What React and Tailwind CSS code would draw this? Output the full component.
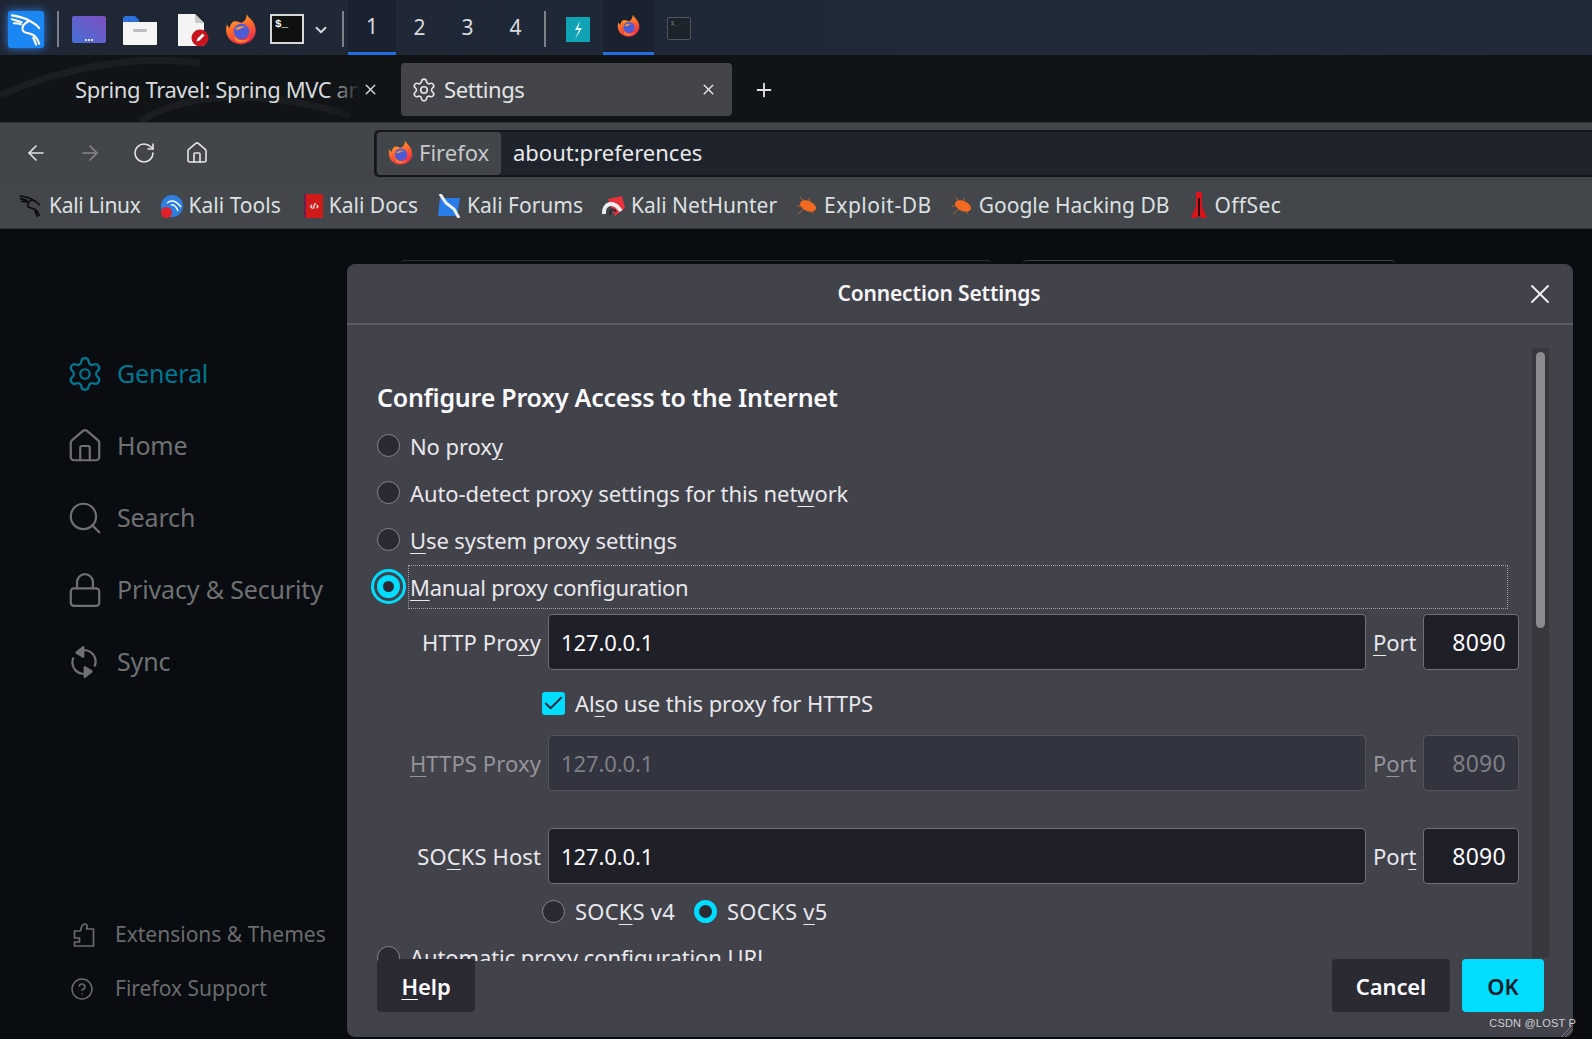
import { ArrowLeft, ArrowRight, RotateCw, Home, X, Plus, Search, Lock, ChevronDown, Check, CircleHelp, Settings } from 'lucide-react';

const FONT = "font-['Noto_Sans',sans-serif]";

function FirefoxIcon({ size = 30, className = '' }) {
    return (
        <svg width={size} height={size} viewBox="0 0 32 32" className={className}>
            <defs>
                <linearGradient id="ffBody" x1="0.2" y1="0" x2="0.6" y2="1">
                    <stop offset="0" stopColor="#ffc02e" />
                    <stop offset="0.45" stopColor="#ff6a2b" />
                    <stop offset="1" stopColor="#e8264d" />
                </linearGradient>
            </defs>
            <path d="M21 1 c1 3 5 5 7 9 c3 6 2 12 -2 16 c-5 5 -14 6 -20 1 C1 23 0 16 2 11 c.5 2 1.500 3 2.500 3.500 C5 11 7 8.500 9 8 c3-.5 5 1 7 1.500 c3-1 5-4 5-8.500 z" fill="url(#ffBody)" />
            <circle cx="16" cy="18" r="7.500" fill="#4f5bd5" />
            <path d="M10 16 c2-3 7-4 11-2 c-3-.5-5 0-6 1.500 c-2 .5-3 .5-5 .5 z" fill="#ff9b2e" />
            <path d="M9 22 c3 5 10 6 15 2 c-2 4-8 6-12 4 c-2-1-3-3-3-6 z" fill="#ff8a2e" />
        </svg>
    );
}

function KaliDragon({ className = '', stroke = 'white', width = 2 }) {
    return (
        <svg viewBox="0 0 36 36" fill="none" stroke={stroke} strokeWidth={width} strokeLinecap="round" strokeLinejoin="round" className={className}>
            <path d="M3 3 c6 1 12 2 17 5 c4 2 8 4 11 8" />
            <path d="M3 7 c4 1 7 2 10 3" />
            <path d="M5 11 c3 0 5 0 7 1" />
            <path d="M20 9 c-4 2 -7 5 -6 9 c1 3 5 3 8 4 c4 1 7 4 9 10" />
            <path d="M25 26 l3 7" />
        </svg>
    );
}

function LauncherIcon() {
    return (
        <div className="w-[34px] h-[27px] rounded-[2px] bg-gradient-to-tr from-[#3f6fd8] to-[#7a4fc0] flex items-end justify-center pb-[2px] gap-[1px]">
            <span className="w-[2px] h-[2px] bg-white/80" />
            <span className="w-[2px] h-[2px] bg-white/80" />
            <span className="w-[2px] h-[2px] bg-white/80" />
        </div>
    );
}

function FolderIcon() {
    return (
        <svg width="36" height="32" viewBox="0 0 36 32">
            <path d="M1 5 a3 3 0 0 1 3-3 h9 l4 4 v4 H1 z" fill="#2f6fdc" />
            <path d="M1 8 h34 v22 a1 1 0 0 1-1 1 H2 a1 1 0 0 1-1-1 z" fill="#f4f5f5" />
            <rect x="11" y="15" width="14" height="3" rx="1.500" fill="#b9bcc0" />
        </svg>
    );
}

function DocIcon() {
    return (
        <svg width="34" height="34" viewBox="0 0 34 34">
            <path d="M1 1 h17 l9 9 v23 H1 z" fill="#f4f4f4" />
            <path d="M18 1 l9 9 h-9 z" fill="#c9c9c9" />
            <circle cx="23" cy="25" r="8.500" fill="#c8141c" />
            <path d="M19.500 28.500 l1-3 5-5 2 2 -5 5 z" fill="white" />
        </svg>
    );
}

function TerminalIcon({ dim }) {
    if (dim) {
        return (
            <div className="w-[24px] h-[23px] rounded-[2px] border border-[#4d5560] bg-[#1b232b] text-[5px] leading-[8px] pl-[3px] pt-[2px] text-[#7f8890] font-['Liberation_Mono',monospace]">$_</div>
        );
    }
    return (
        <div className="w-[34px] h-[30px] border-2 border-[#d5d7d9] bg-[#0e1110] text-white text-[11px] leading-[16px] font-bold pl-[3px] font-['Liberation_Mono',monospace]">$_</div>
    );
}

function Separator({ className = '' }) {
    return <div className={`w-[2px] h-[36px] bg-[#7c8188] ${className}`} />;
}

function Panel() {
    return (
        <div className={`h-[55px] flex items-start bg-gradient-to-r from-[#1f2735] to-[#202a38] ${FONT}`}>
            <div className="ml-[8px] mt-[11px] w-[36px] h-[37px] rounded-[3px] bg-[#1c86f2] shadow-[0_0_9px_#2f7fe8] flex items-center justify-center">
                <KaliDragon className="w-[35px] h-[36px]" width={2.2} />
            </div>
            <Separator className="ml-[13px] mt-[11px]" />
            <div className="ml-[13px] mt-[16px]"><LauncherIcon /></div>
            <div className="ml-[16px] mt-[14px]"><FolderIcon /></div>
            <div className="ml-[19px] mt-[13px]"><DocIcon /></div>
            <div className="ml-[14px] mt-[13px]"><FirefoxIcon size={33} /></div>
            <div className="ml-[12px] mt-[14px]"><TerminalIcon /></div>
            <ChevronDown size={18} strokeWidth={2.5} className="ml-[8px] mt-[21px] text-[#d5d7d9]" />
            <Separator className="ml-[12px] mt-[11px]" />
            <div className="ml-[4px] w-[48px] h-[55px] bg-[#1a2230] border-b-[3px] border-[#1f6fe0] flex items-center justify-center text-[#d8dade] text-[21px] pt-[2px]">1</div>
            <div className="w-[47px] h-[55px] flex items-center justify-center text-[#d8dade] text-[21px] pt-[1px]">2</div>
            <div className="w-[49px] h-[55px] flex items-center justify-center text-[#d8dade] text-[21px] pt-[1px]">3</div>
            <div className="w-[47px] h-[55px] flex items-center justify-center text-[#d8dade] text-[21px] pt-[1px]">4</div>
            <Separator className="ml-[5px] mt-[11px]" />
            <div className="ml-[20px] mt-[17px] w-[24px] h-[25px] bg-[#10a3b5] flex items-center justify-center">
                <svg width="12" height="20" viewBox="0 0 12 20"><path d="M8 1 L3 10 h4 L3 19 L10 8 H6 z" fill="#e8fbff" /></svg>
            </div>
            <div className="ml-[13px] w-[51px] h-[55px] bg-[#1a2230] border-b-[3px] border-[#1f6fe0] flex items-center justify-center">
                <FirefoxIcon size={24} />
            </div>
            <div className="ml-[13px] mt-[17px]"><TerminalIcon dim /></div>
        </div>
    );
}

function TabStrip() {
    return (
        <div className={`h-[67px] relative flex items-start bg-[#101417] overflow-hidden ${FONT}`}>
            <svg className="absolute left-0 top-0" width="380" height="67" viewBox="0 0 380 67" fill="none" stroke="#1a1e21" strokeWidth="7">
                <path d="M0 40 C70 10 140 0 200 8" />
                <path d="M140 66 C200 30 280 40 350 60" />
            </svg>
            <div className="relative ml-[75px] mt-[8px] w-[285px] h-[53px] flex items-center text-[#d8dadd] text-[22px] tracking-[-0.4px] whitespace-nowrap overflow-hidden">
                Spring Travel: Spring MVC and Spring
                <div className="absolute right-0 top-0 h-full w-[32px] bg-gradient-to-r from-transparent to-[#101417]" />
            </div>
            <X size={17} className="relative ml-[2px] mt-[26px] text-[#d8dadd]" />
            <div className="relative ml-[22px] mt-[8px] w-[331px] h-[53px] rounded-[4px] bg-[#42444a] flex items-center text-[#e3e4e6] text-[22px] tracking-[-0.4px]">
                <Settings size={26} strokeWidth={1.5} className="ml-[10px] mr-[7px] text-[#e3e4e6]" />
                Settings
                <X size={17} className="ml-auto mr-[15px]" />
            </div>
            <Plus size={22} className="relative ml-[21px] mt-[24px] text-[#e3e4e6]" />
        </div>
    );
}

function NavBar() {
    return (
        <div className={`h-[61px] flex items-center bg-[#42454a] border-t border-[#2f3236] ${FONT}`}>
            <ArrowLeft size={24} strokeWidth={1.6} className="ml-[24px] text-[#e3e4e6]" />
            <ArrowRight size={24} strokeWidth={1.6} className="ml-[30px] text-[#85878b]" />
            <RotateCw size={24} strokeWidth={1.6} className="ml-[30px] text-[#e3e4e6]" />
            <Home size={24} strokeWidth={1.6} className="ml-[29px] text-[#e3e4e6]" />
            <div className="ml-[165px] flex-1 h-[47px] rounded-l-[5px] border-2 border-[#14161a] border-r-0 bg-[#1f232b] flex items-center">
                <div className="ml-[1px] w-[124px] h-[43px] rounded-[4px] bg-[#42454a] flex items-center text-[#c6c8cb] text-[22px] pb-[1px]">
                    <FirefoxIcon size={26} className="ml-[11px] mr-[5px]" />
                    Firefox
                </div>
                <span className="ml-[12px] text-[#e8e9eb] text-[22px] pb-[2px]">about:preferences</span>
            </div>
        </div>
    );
}

function BugIcon() {
    return (
        <svg width="22" height="22" viewBox="0 0 22 22">
            <path d="M4 2 L9 7 M2 19 L8 14 M13 3 L13 8 M17 19 L14 14 M1 11 L6 11" stroke="#b3622f" strokeWidth="1" />
            <ellipse cx="12" cy="11" rx="8.500" ry="5" transform="rotate(25 12 11)" fill="#f26a21" />
        </svg>
    );
}

const BOOKMARKS = [
    { label: 'Kali Linux', ml: 'ml-[18px]', tracking: 'tracking-[-0.3px]', icon: <KaliDragon className="w-[25px] h-[24px]" stroke="#0b0b0b" width={2.6} /> },
    {
        label: 'Kali Tools', ml: 'ml-[20px]', icon: (
            <div className="relative w-[22px] h-[24px]">
                <svg width="22" height="22" viewBox="0 0 22 22" className="mt-[1px]">
                    <circle cx="11" cy="11" r="11" fill="#2f7fe0" />
                    <path d="M6 8 C11 4 15 6 20 12 M10 10 C13 9 15 11 17 16" stroke="white" strokeWidth="1.400" fill="none" />
                </svg>
                <div className="absolute left-0 bottom-0 w-[11px] h-[11px] rounded-full bg-[#e0232b]" />
            </div>
        )
    },
    {
        label: 'Kali Docs', ml: 'ml-[23px]', icon: (
            <div className="w-[19px] h-[24px] rounded-[1px] bg-[#cf1a1a] border-l-2 border-[#6b1f4a] flex items-center justify-center text-white text-[8px] font-bold">‹/›</div>
        )
    },
    {
        label: 'Kali Forums', ml: 'ml-[19px]', icon: (
            <svg width="24" height="24" viewBox="0 0 24 24">
                <path d="M3 4 H23 L20 22 H1 z" fill="#2a7de8" />
                <path d="M3 0 L9 9 L17 15 L22 24" stroke="#eef1f4" strokeWidth="3" fill="none" />
            </svg>
        )
    },
    {
        label: 'Kali NetHunter', ml: 'ml-[18px]', icon: (
            <svg width="24" height="24" viewBox="0 0 24 24">
                <path d="M7 5 L21 2 L24 14 L14 22 z" fill="#e8333a" />
                <path d="M3 20 C2 10 12 5 20 17" stroke="#eceff2" strokeWidth="4" fill="none" />
                <path d="M9 21 C9 15 13 14 15 18" stroke="#2b2b2e" strokeWidth="2" fill="none" />
            </svg>
        )
    },
    { label: 'Exploit-DB', ml: 'ml-[19px]', tracking: 'tracking-[0.5px]', icon: <BugIcon /> },
    { label: 'Google Hacking DB', ml: 'ml-[19px]', icon: <BugIcon /> },
    {
        label: 'OffSec', ml: 'ml-[21px]', tracking: 'tracking-[0.4px]', icon: (
            <svg width="18" height="28" viewBox="0 0 18 28">
                <path d="M6 0 H12 L12 14 L17 26 H11 L9 23 L7 26 H1 L6 14 z" fill="#d8141a" />
                <path d="M9 6 V24" stroke="#2a0a0a" strokeWidth="2" />
            </svg>
        )
    },
];

function Bookmarks() {
    return (
        <div className={`h-[46px] flex items-center bg-[#43464a] border-b border-[#2f3236] ${FONT}`}>
            {BOOKMARKS.map((b) => (
                <div key={b.label} className={`flex items-center gap-[6px] text-[21px] text-[#dde0e2] ${b.ml}`}>
                    {b.icon}
                    <span className={`pt-[1px] ${b.tracking || ''}`}>{b.label}</span>
                </div>
            ))}
        </div>
    );
}

function SyncIcon({ size = 36 }) {
    return (
        <svg width={size} height={size} viewBox="0 0 24 24" fill="none" stroke="currentColor" strokeWidth="1.500" strokeLinejoin="round">
            <path d="M18.500 7.500 A8 8 0 0 0 7 5.800" />
            <path d="M5.500 16.500 A8 8 0 0 0 17 18.200" />
            <path d="M5.500 16.500 A8 8 0 0 1 5 9" />
            <path d="M18.500 7.500 A8 8 0 0 1 19 15" />
            <path d="M11.500 2 L7 5.800 L11.500 8.500 z" fill="currentColor" />
            <path d="M12.500 22 L17 18.200 L12.500 15.500 z" fill="currentColor" />
        </svg>
    );
}

function PuzzleIcon() {
    return (
        <svg width="22" height="26" viewBox="0 0 22 26" fill="none" stroke="currentColor" strokeWidth="1.700" strokeLinejoin="round">
            <path d="M1.500 24 V20 h5 v-4 h-5 V9 h5 c.5 0 1.500-.5 1.500-1.500 C8 5 10 2 12 2 c2 0 2.500 2 1.500 5 h7 v17 z" />
        </svg>
    );
}

function NavItem({ icon, label, active }) {
    return (
        <div className={`h-[72px] flex items-center text-[25px] tracking-[-0.15px] ${active ? 'text-[#00778f]' : 'text-[#6f7072]'}`}>
            <div className="w-[49px] -ml-[2px] mr-[2px] flex justify-start">{icon}</div>
            <span>{label}</span>
        </div>
    );
}

function Sidebar() {
    return (
        <aside className={`w-[347px] shrink-0 flex flex-col pl-[68px] pt-[109px] pb-[23px] ${FONT}`}>
            <NavItem active label="General" icon={<Settings size={38} strokeWidth={1.4} />} />
            <NavItem label="Home" icon={<Home size={38} strokeWidth={1.4} />} />
            <NavItem label="Search" icon={<Search size={38} strokeWidth={1.4} />} />
            <NavItem label="Privacy & Security" icon={<Lock size={38} strokeWidth={1.4} />} />
            <NavItem label="Sync" icon={<SyncIcon />} />
            <div className="mt-auto flex flex-col text-[21px] text-[#6a6b6d]">
                <div className="h-[54px] flex items-center">
                    <div className="w-[47px] pl-[5px]"><PuzzleIcon /></div>
                    Extensions &amp; Themes
                </div>
                <div className="h-[54px] flex items-center">
                    <div className="w-[47px] pl-[2px]"><CircleHelp size={24} strokeWidth={1.5} /></div>
                    Firefox Support
                </div>
            </div>
        </aside>
    );
}

function Radio({ checked }) {
    if (checked) {
        return <div className="w-[23px] h-[23px] rounded-full border-[5px] border-[#00ddff] bg-[#2b2a33] shrink-0" />;
    }
    return <div className="w-[23px] h-[23px] rounded-full border border-[#85858c] bg-[#2b2a33] shrink-0" />;
}

function Key({ children }) {
    return <u className="underline underline-offset-[4px] decoration-1">{children}</u>;
}

function RadioRow({ children }) {
    return (
        <div className="h-[47px] flex items-center gap-[10px]">
            <Radio />
            <span className="pt-[1px]">{children}</span>
        </div>
    );
}

function ProxyRow({ label, value, portLabel, disabled, className = '' }) {
    const inputCls = disabled
        ? 'bg-[#32343f] border-[#53535b] text-[#7f7f86]'
        : 'bg-[#1f1f27] border-[#6e6e75] text-[#fbfbfe]';
    return (
        <div className={`h-[56px] flex items-center ${disabled ? 'text-[#94949a]' : 'text-[#e8e8ec]'} ${className}`}>
            <div className="w-[164px] text-right whitespace-nowrap tracking-[0.1px]">{label}</div>
            <div className={`ml-[7px] w-[818px] h-[56px] rounded-[4px] border flex items-center pl-[12px] ${inputCls}`}>{value}</div>
            <div className="ml-[7px] w-[42px] whitespace-nowrap">{portLabel}</div>
            <div className={`ml-[8px] w-[96px] h-[56px] rounded-[4px] border flex items-center justify-end pr-[12px] text-[23px] tracking-[0.3px] ${inputCls}`}>8090</div>
        </div>
    );
}

function Dialog() {
    return (
        <div className={`flex-1 flex flex-col pt-[31px] pb-[2px] pr-[19px] ${FONT}`}>
            <div className="h-[5px] flex gap-[32px] pl-[54px] -mb-[1px]">
                <div className="w-[590px] h-[8px] rounded-t-[4px] border-t border-[#2f3036]" />
                <div className="w-[372px] h-[8px] rounded-t-[4px] border-t border-[#3f4046]" />
            </div>
            <div className="relative flex-1 flex flex-col rounded-[8px] bg-[#42424b] text-[#e8e8ec] text-[22px] tracking-[-0.1px] overflow-hidden">
                <div className="h-[61px] shrink-0 border-b-2 border-[#5a5a62] flex items-center">
                    <div className="flex-1 text-center pl-[7px] text-[21px] tracking-[-0.15px] font-semibold text-[#f5f5f7]">Connection Settings</div>
                    <X size={32} strokeWidth={1.4} className="mr-[17px] text-[#f0f0f3]" />
                </div>
                <div className="h-[636px] shrink-0 flex overflow-hidden">
                    <div className="w-[1172px] pl-[30px] shrink-0">
                        <h1 className="mt-[50px] h-[46px] flex items-center text-[25px] tracking-[-0.25px] font-semibold text-[#fbfbfe]">Configure Proxy Access to the Internet</h1>
                        <div className="mt-[1px]">
                            <RadioRow>No prox<Key>y</Key></RadioRow>
                            <RadioRow>Auto-detect proxy settings for this net<Key>w</Key>ork</RadioRow>
                            <RadioRow><Key>U</Key>se system proxy settings</RadioRow>
                            <div className="h-[47px] flex items-center">
                                <div className="-ml-[6px] w-[35px] h-[35px] rounded-full border-[3px] border-[#00ddff] flex items-center justify-center shrink-0">
                                    <div className="w-[23px] h-[23px] rounded-full border-[6px] border-[#00ddff] bg-[#2b2a33]" />
                                </div>
                                <div className="ml-[2px] mr-[11px] flex-1 h-[44px] flex items-center pl-[1px] border border-dotted border-[#a0a0a8]">
                                    <span className="pt-[1px] tracking-[-0.3px]"><Key>M</Key>anual proxy configuration</span>
                                </div>
                            </div>
                        </div>
                        <ProxyRow className="mt-[4px]" label={<>HTTP Pro<Key>x</Key>y</>} value="127.0.0.1" portLabel={<><Key>P</Key>ort</>} />
                        <div className="mt-[22px] ml-[165px] h-[23px] flex items-center gap-[10px]">
                            <div className="w-[23px] h-[23px] rounded-[3px] bg-[#00ddff] flex items-center justify-center">
                                <Check size={23} strokeWidth={2} className="text-[#1f2a3a]" />
                            </div>
                            <span>Al<Key>s</Key>o use this proxy for HTTPS</span>
                        </div>
                        <ProxyRow disabled className="mt-[20px]" label={<><Key>H</Key>TTPS Proxy</>} value="127.0.0.1" portLabel={<>P<Key>o</Key>rt</>} />
                        <ProxyRow className="mt-[37px]" label={<>SO<Key>C</Key>KS Host</>} value="127.0.0.1" portLabel={<>Por<Key>t</Key></>} />
                        <div className="mt-[16px] ml-[165px] h-[23px] flex items-center">
                            <Radio />
                            <span className="ml-[10px] tracking-[0.2px]">SOC<Key>K</Key>S v4</span>
                            <div className="ml-[19px]"><Radio checked /></div>
                            <span className="ml-[10px] tracking-[0.3px]">SOCKS <Key>v</Key>5</span>
                        </div>
                        <div className="mt-[23px] h-[23px] flex items-center gap-[10px]">
                            <Radio />
                            <span className="whitespace-nowrap">Automatic proxy configuration URL</span>
                        </div>
                    </div>
                    <div className="ml-[13px] mt-[23px] w-[17px] h-[610px] bg-[#37373d] pt-[4px] flex justify-center">
                        <div className="w-[9px] h-[276px] rounded-full bg-[#8a8a90]" />
                    </div>
                </div>
                <div className="relative flex items-start pl-[30px] pr-[29px] pt-[1px] -mt-[3px] font-semibold">
                    <div className="w-[98px] h-[53px] rounded-[4px] bg-[#2b2a33] flex items-center justify-center text-[#fbfbfe] pt-[1px]"><Key>H</Key>elp</div>
                    <div className="ml-auto w-[118px] h-[53px] rounded-[4px] bg-[#2b2a33] flex items-center justify-center text-[#fbfbfe] pt-[2px]">Cancel</div>
                    <div className="ml-[12px] w-[82px] h-[53px] rounded-[4px] bg-[#00ddff] flex items-center justify-center text-[#15202b] pt-[1px]">OK</div>
                </div>
                <svg className="absolute right-0 bottom-0" width="14" height="14" viewBox="0 0 14 14" stroke="#77777f" strokeWidth="1">
                    <path d="M14 2 L2 14 M14 6 L6 14 M14 10 L10 14" />
                </svg>
            </div>
        </div>
    );
}

export default function App() {
    return (
        <div className="relative w-[1592px] h-[1039px] flex flex-col overflow-hidden bg-[#090c11]">
            <Panel />
            <TabStrip />
            <NavBar />
            <Bookmarks />
            <main className="flex-1 flex min-h-0">
                <Sidebar />
                <Dialog />
            </main>
            <div className="absolute right-[16px] bottom-[9px] text-[11px] leading-[14px] text-[#d0d0d4] font-['Liberation_Sans',sans-serif] tracking-[0.2px]">CSDN @LOST P</div>
        </div>
    );
}
